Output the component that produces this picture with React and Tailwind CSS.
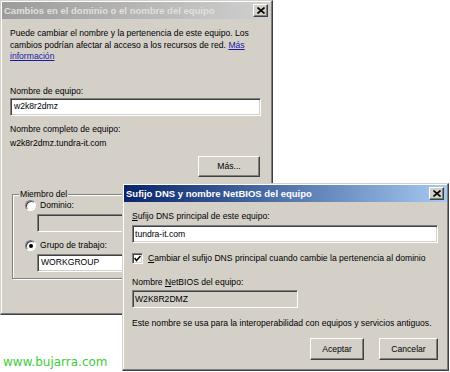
import React from "react";

const sunken =
  "border border-t-[#808080] border-l-[#808080] border-b-white border-r-white shadow-[inset_1px_1px_0_#404040,inset_-1px_-1px_0_#d4d0c8]";
const raised =
  "border border-t-white border-l-white border-b-[#404040] border-r-[#404040] shadow-[inset_-1px_-1px_0_#808080]";

function CloseBtn() {
  return (
    <div className={`flex h-[13px] w-[15px] items-center justify-center bg-[#d4d0c8] ${raised}`}>
      <svg width="8" height="7" viewBox="0 0 8 7">
        <path d="M0.5 0.5 L7.5 6.5 M7.5 0.5 L0.5 6.5" stroke="#000" strokeWidth="1.6" />
      </svg>
    </div>
  );
}

function Radio({ checked }) {
  return (
    <div className="relative h-[11px] w-[11px] rounded-full border border-t-[#808080] border-l-[#808080] border-b-white border-r-white bg-white shadow-[inset_1px_1px_0_#404040]">
      {checked && <div className="absolute left-[3px] top-[3px] h-[4px] w-[4px] rounded-full bg-black" />}
    </div>
  );
}

export default function App() {
  return (
    <div
      className="relative h-[372px] w-[450px] overflow-hidden bg-white text-[8.6px] leading-[11px] text-black"
      style={{ fontFamily: '"Liberation Sans", Arial, sans-serif' }}
    >
      {/* Left window (inactive) */}
      <div className="absolute left-0 top-0 flex h-[315px] w-[273px] flex-col border border-t-[#d4d0c8] border-l-[#d4d0c8] border-b-[#404040] border-r-[#404040] bg-[#d4d0c8] shadow-[inset_-1px_-1px_0_#808080,inset_1px_1px_0_white]">
        <div className="mx-[1px] mt-[1px] flex h-[17px] items-center justify-between bg-gradient-to-r from-[#9c9c9c] to-[#d0d0d0] pl-[2px] pr-[3px]">
          <span className="text-[9.5px] font-bold text-[#e2e0da]">Cambios en el dominio o el nombre del equipo</span>
          <CloseBtn />
        </div>
        <div className="flex flex-col px-[9px]">
          <div className="mt-[9px] flex flex-col leading-[11.5px]">
            <div className="whitespace-nowrap">Puede cambiar el nombre y la pertenencia de este equipo. Los</div>
            <div className="flex gap-[2.5px] whitespace-nowrap">
              <span>cambios podrían afectar al acceso a los recursos de red.</span>
              <span className="text-[#1a1aa6] underline">Más</span>
            </div>
            <div>
              <span className="text-[#1a1aa6] underline">información</span>
            </div>
          </div>
          <div className="mt-[23px]">Nombre de equipo:</div>
          <div className={`mt-[1px] flex h-[18px] w-[251px] items-center bg-white px-[3px] ${sunken}`}>w2k8r2dmz</div>
          <div className="mt-[8px]">Nombre completo de equipo:</div>
          <div className="mt-[3px]">w2k8r2dmz.tundra-it.com</div>
          <div className="flex justify-end pr-[3px]">
            <div className={`mt-[7px] flex h-[21px] w-[62px] items-center justify-center ${raised}`}>Más...</div>
          </div>
          <div className="relative ml-[2px] mt-[17px] h-[85px] w-[257px] border border-[#808080] shadow-[1px_1px_0_white,inset_1px_1px_0_white]">
            <span className="absolute left-[6px] top-[-6px] bg-[#d4d0c8] px-[1px]">Miembro del</span>
            <div className="flex flex-col pl-[12px] pt-[5px]">
              <div className="flex items-center gap-[4px]">
                <Radio />
                <span>Dominio:</span>
              </div>
              <div className={`ml-[12px] mt-[3px] h-[18px] w-[225px] bg-[#d4d0c8] ${sunken}`} />
              <div className="mt-[8px] flex items-center gap-[4px]">
                <Radio checked />
                <span>Grupo de trabajo:</span>
              </div>
              <div className={`ml-[12px] mt-[3px] flex h-[18px] w-[225px] items-center bg-white px-[3px] ${sunken}`}>WORKGROUP</div>
            </div>
          </div>
        </div>
      </div>

      <div
        className="absolute left-[3px] top-[355px] text-[12px] leading-[15px] text-[#3ccc3c]"
        style={{ fontFamily: '"DejaVu Sans", Verdana, sans-serif' }}
      >
        www.bujarra.com
      </div>

      {/* Right window (active) */}
      <div className="absolute left-[122px] top-[183px] flex h-[188px] w-[327px] flex-col border border-t-[#d4d0c8] border-l-[#d4d0c8] border-b-[#404040] border-r-[#404040] bg-[#d4d0c8] shadow-[inset_-1px_-1px_0_#808080,inset_1px_1px_0_white]">
        <div className="mx-[1px] mt-[1px] flex h-[17px] items-center justify-between bg-gradient-to-r from-[#0a246a] to-[#a6caf0] pl-[2px] pr-[3px]">
          <span className="text-[9.5px] font-bold text-white">Sufijo DNS y nombre NetBIOS del equipo</span>
          <CloseBtn />
        </div>
        <div className="flex flex-col px-[9px]">
          <div className="mt-[9px]">
            <span className="underline">S</span>ufijo DNS principal de este equipo:
          </div>
          <div className={`mt-[3px] flex h-[18px] w-[306px] items-center bg-white px-[2px] ${sunken}`}>tundra-it.com</div>
          <div className="mt-[10px] flex items-center gap-[5px]">
            <div className={`flex h-[11px] w-[11px] items-center justify-center bg-white ${sunken}`}>
              <svg width="7" height="7" viewBox="0 0 7 7">
                <path d="M0.5 3 L2.5 5.5 L6.5 1" stroke="#000" strokeWidth="1.5" fill="none" />
              </svg>
            </div>
            <span>
              <span className="underline">C</span>ambiar el sufijo DNS principal cuando cambie la pertenencia al dominio
            </span>
          </div>
          <div className="mt-[13px]">
            Nombre <span className="underline">N</span>etBIOS del equipo:
          </div>
          <div className={`mt-[2px] flex h-[18px] w-[166px] items-center bg-[#d4d0c8] px-[2px] ${sunken}`}>W2K8R2DMZ</div>
          <div className="mt-[10px] whitespace-nowrap">Este nombre se usa para la interoperabilidad con equipos y servicios antiguos.</div>
          <div className="mt-[9px] flex justify-end gap-[15px] pr-[1px]">
            <div className={`flex h-[22px] w-[54px] items-center justify-center ${raised}`}>Aceptar</div>
            <div className={`flex h-[22px] w-[59px] items-center justify-center ${raised}`}>Cancelar</div>
          </div>
        </div>
      </div>
    </div>
  );
}
